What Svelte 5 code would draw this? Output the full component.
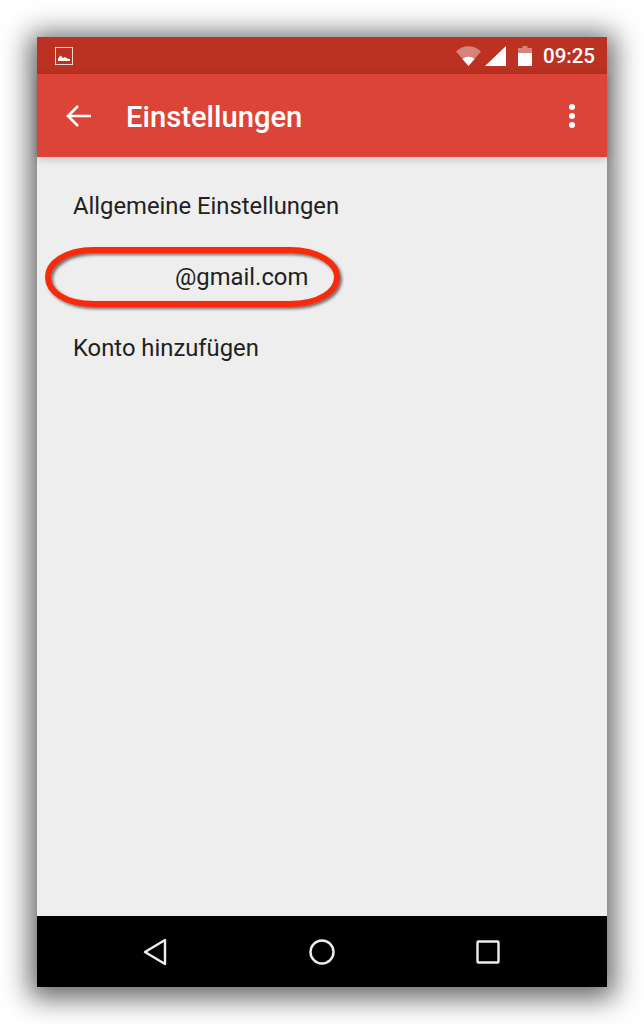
<script>
    const items = [
        { label: 'Allgemeine Einstellungen' },
        { label: '@gmail.com', indent: true },
        { label: 'Konto hinzufügen' }
    ];
</script>

<div class="page">
    <div class="phone">
        <div class="status">
            <svg class="thumb" width="18" height="18" viewBox="0 0 18 18">
                <rect x="0.5" y="0.5" width="17" height="17" fill="none" stroke="#f4d9d4" stroke-width="1"/>
                <path d="M3 14 V11.5 L5.5 8.5 L8 11 L10 10 L12 11.5 L15 12 V14 Z" fill="#fff"/>
            </svg>
            <div class="spacer"></div>
            <svg class="wifi" width="25" height="20" viewBox="0 0 25 20">
                <path d="M0 5.5 C7 -1.5 18 -1.5 25 5.5 L12.5 20 Z" fill="#fff" fill-opacity="0.4"/>
                <path d="M6.5 13 C10 10 15 10 18.5 13 L12.5 20 Z" fill="#fff"/>
            </svg>
            <svg class="signal" width="21" height="20" viewBox="0 0 21 20">
                <path d="M21 0 V20 H0 Z" fill="#fff"/>
            </svg>
            <svg class="battery" width="14" height="20" viewBox="0 0 14 20">
                <path d="M4.5 0 H9.5 V2 H14 V8 H0 V2 H4.5 Z" fill="#fff" fill-opacity="0.4"/>
                <rect x="0" y="7" width="14" height="13" fill="#fff"/>
            </svg>
            <span class="time">09:25</span>
        </div>

        <header class="toolbar">
            <svg class="back" width="26" height="24" viewBox="0 0 26 24">
                <path d="M25 12 H2.5 M12 2 L2 12 L12 22" fill="none" stroke="#fff" stroke-width="2.6"/>
            </svg>
            <h1>Einstellungen</h1>
            <svg class="more" width="8" height="24" viewBox="0 0 8 24">
                <circle cx="4" cy="3" r="3" fill="#fff"/>
                <circle cx="4" cy="12" r="3" fill="#fff"/>
                <circle cx="4" cy="21" r="3" fill="#fff"/>
            </svg>
        </header>

        <main class="content">
            {#each items as item}
                <div class="item" class:indent={item.indent}>{item.label}</div>
            {/each}
            <svg class="mark" width="302" height="66" viewBox="0 0 302 66">
                <defs>
                    <filter id="sh" x="-5%" y="-20%" width="110%" height="140%">
                        <feDropShadow dx="2" dy="2" stdDeviation="1.6" flood-color="#000" flood-opacity="0.55"/>
                    </filter>
                </defs>
                <path d="M50 4 H245 C276 4 293 18 293 31 C293 45 276 58 245 58 H50 C20 58 4 45 4 31 C4 18 20 4 50 4 Z" fill="none" stroke="#f82a07" stroke-width="6" filter="url(#sh)"/>
            </svg>
        </main>

        <nav class="navbar">
            <svg width="24" height="28" viewBox="0 0 24 28">
                <path d="M22 2 V26 L2 14 Z" fill="none" stroke="#eee" stroke-width="2.4" stroke-linejoin="round"/>
            </svg>
            <svg width="26" height="26" viewBox="0 0 26 26">
                <circle cx="13" cy="13" r="11.5" fill="none" stroke="#eee" stroke-width="2.4"/>
            </svg>
            <svg width="24" height="24" viewBox="0 0 24 24">
                <rect x="1.5" y="1.5" width="21" height="21" rx="1" fill="none" stroke="#eee" stroke-width="2.4"/>
            </svg>
        </nav>
    </div>
</div>

<style>
    :global(body) {
        background: #fff;
    }

    .page {
        width: 644px;
        height: 1024px;
        padding: 37px;
        box-sizing: border-box;
        overflow: hidden;
        font-family: Roboto, "Liberation Sans", sans-serif;
    }

    .phone {
        width: 570px;
        height: 950px;
        display: flex;
        flex-direction: column;
        background: #eee;
        box-shadow: 0 4px 26px 7px rgba(0, 0, 0, 0.62);
    }

    .status {
        height: 37px;
        flex: none;
        display: flex;
        align-items: center;
        background: #bb3122;
        padding: 0 12px 0 18px;
    }

    .spacer {
        flex: 1;
    }

    .wifi {
        margin-right: 4px;
    }

    .signal {
        margin-right: 12px;
    }

    .battery {
        margin-right: 11px;
    }

    .time {
        color: #fff;
        font-size: 20.5px;
        font-weight: 500;
    }

    .toolbar {
        height: 83px;
        flex: none;
        display: flex;
        align-items: center;
        background: #dd4438;
        padding: 0 31px 0 29px;
        position: relative;
        z-index: 1;
        box-shadow: 0 2px 8px rgba(0, 0, 0, 0.2);
    }

    .toolbar h1 {
        flex: 1;
        margin: 3px 0 0 34px;
        color: #fff;
        font-size: 29.2px;
        font-weight: 500;
    }

    .content {
        flex: 1;
        position: relative;
        padding-top: 13px;
        box-sizing: border-box;
    }

    .item {
        height: 71px;
        line-height: 72px;
        padding-left: 36px;
        color: #212121;
        font-size: 23.8px;
    }

    .item.indent {
        padding-left: 138px;
    }

    .mark {
        position: absolute;
        left: 7px;
        top: 89px;
    }

    .navbar {
        height: 71px;
        flex: none;
        display: flex;
        align-items: center;
        justify-content: space-between;
        background: #000;
        padding: 0 107px 0 106px;
    }
</style>
